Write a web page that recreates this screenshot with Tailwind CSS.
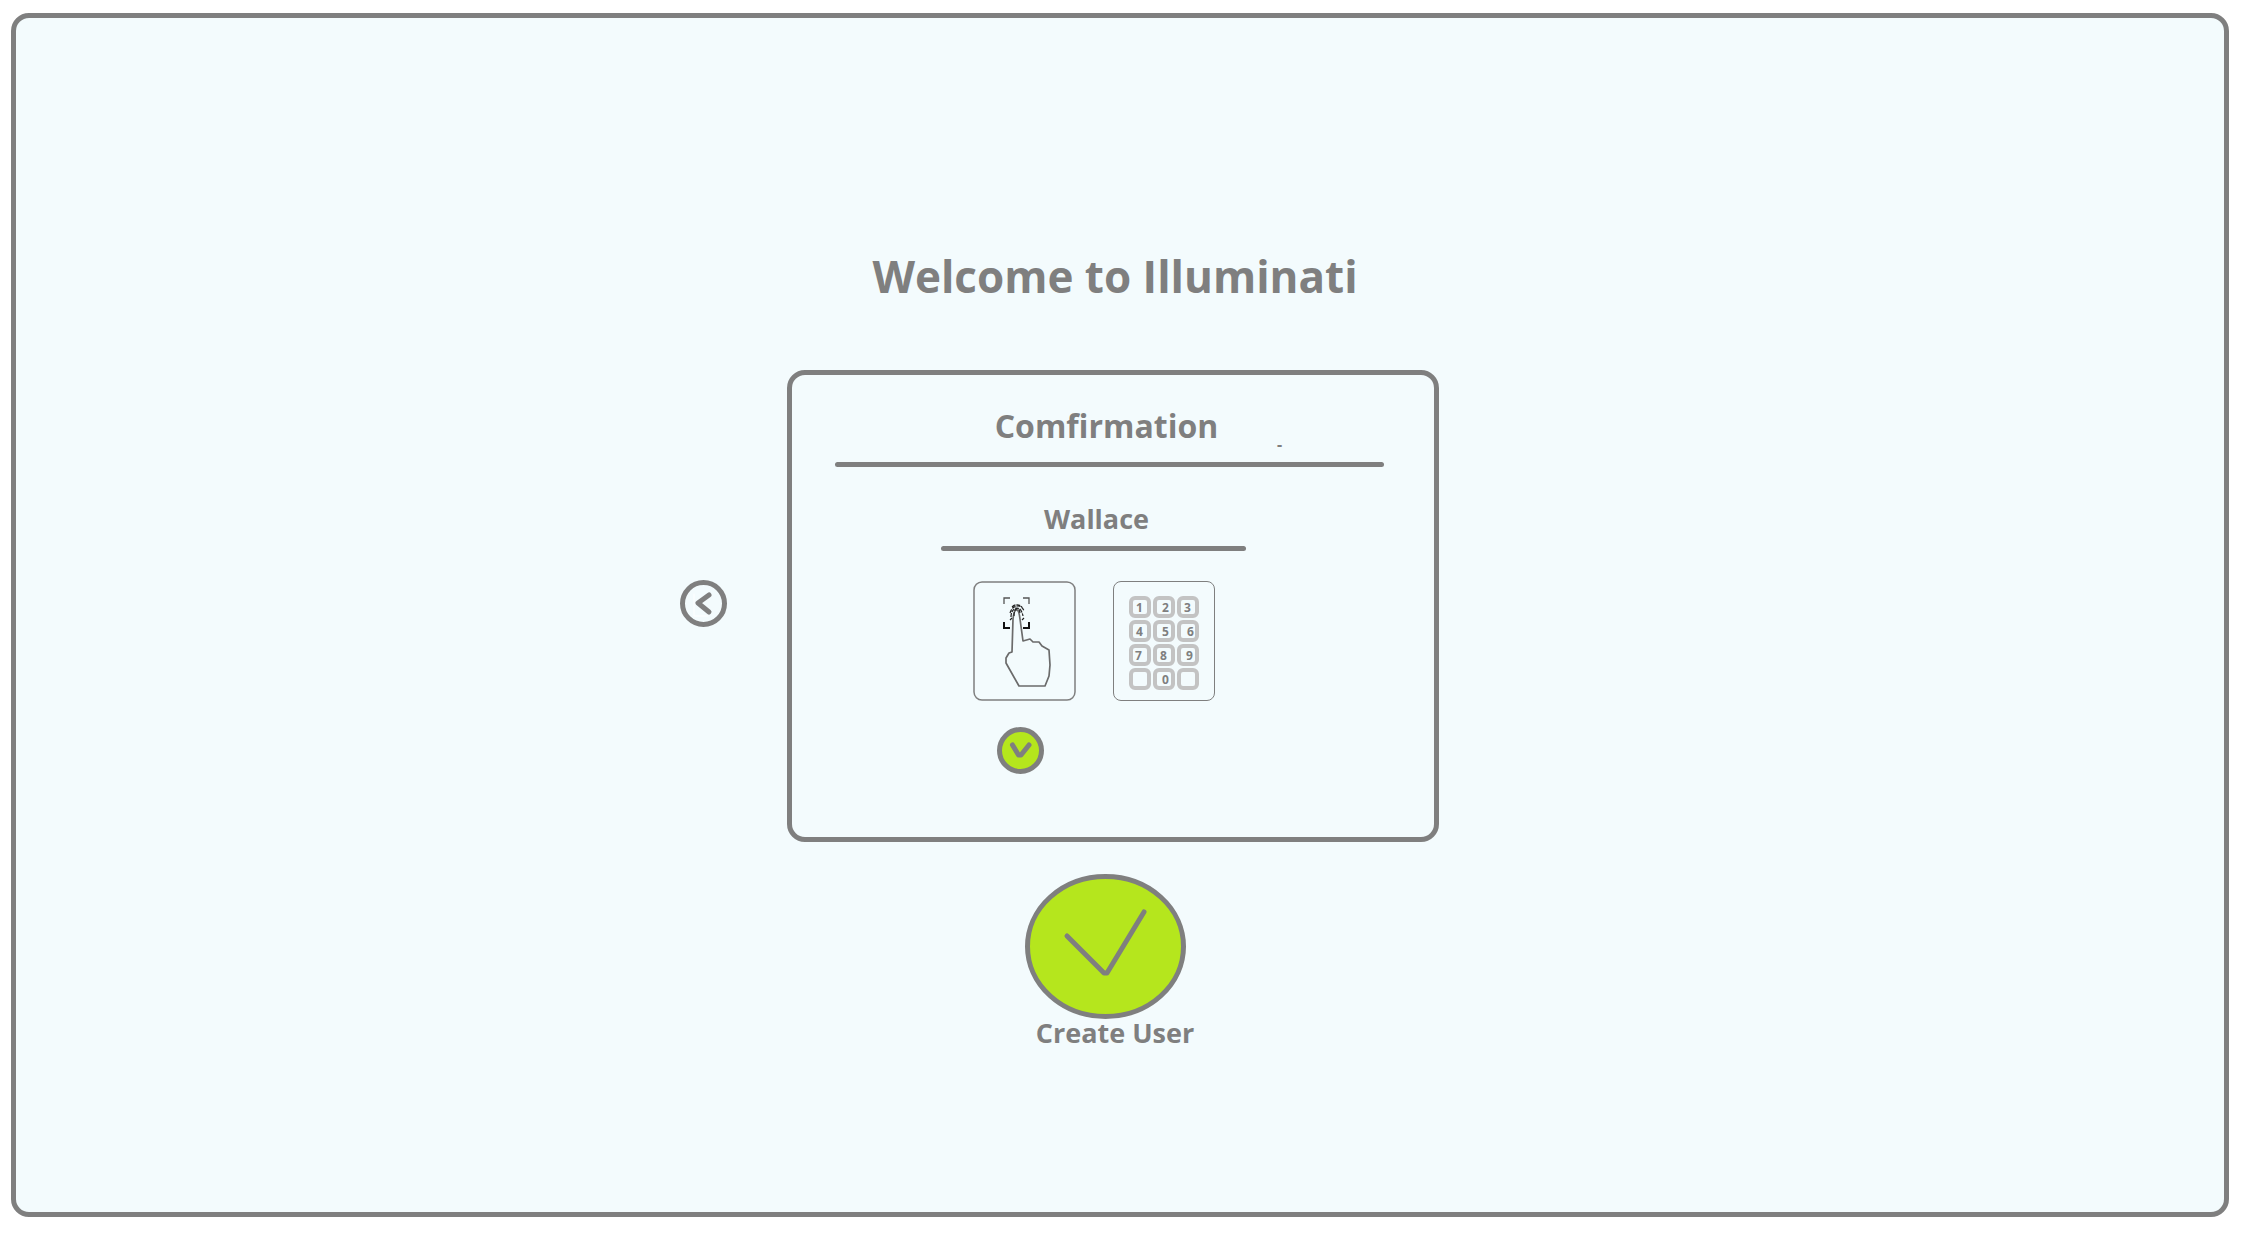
<!DOCTYPE html>
<html lang="en">
<head>
<meta charset="utf-8">
<title>Welcome to Illuminati</title>
<script src="https://cdn.jsdelivr.net/npm/@tailwindcss/browser@4"></script>
</head>
<body class="flex min-h-screen flex-col bg-white pt-[13px] pr-[19px] pb-[35px] pl-[11px] font-['Open_Sans','Noto_Sans',sans-serif] text-[#7f7f7f]">
<main class="flex grow flex-col rounded-[18px] border-5 border-[#7f7f7f] bg-[#f3fbfd] pt-[224px] pr-[14px]">
  <h1 class="pl-[4px] text-center text-[44px] leading-[68px] font-bold">Welcome to Illuminati</h1>

  <div class="mt-[60px] grid grid-cols-[1fr_652px_1fr] items-center">
    <button type="button" aria-label="Back" class="mr-[60px] mb-[5px] justify-self-end">
      <svg class="block size-[47px]" viewBox="0 0 47 47" fill="none" stroke="#7f7f7f" stroke-width="5" stroke-linecap="round" stroke-linejoin="round"><path d="M14 14v22h14" stroke="#fff" stroke-width="1"/><circle cx="23.500" cy="23.500" r="21"/><path d="M29 15l-11 8 11 9"/></svg>
    </button>

    <section class="min-h-[472px] rounded-[18px] border-5 border-[#7f7f7f] pt-[28px] pb-[61px] pl-[43px]">
      <div class="relative w-[549px]">
        <h2 class="pr-[6px] text-center text-[32px] leading-[46px] font-bold">Comfirmation</h2>
        <span class="absolute top-[31px] left-[442px] text-[16px] leading-[20px] font-bold" aria-hidden="true">-</span>
        <div class="mt-[13px] h-[5px] rounded-full bg-[#7f7f7f]"></div>
      </div>
      <div class="flex w-[549px] flex-col items-center pr-[32px]">
        <h3 class="mt-[32px] pl-[6px] text-[27px] leading-[40px] font-bold">Wallace</h3>
        <div class="mt-[7px] h-[5px] w-[305px] rounded-full bg-[#7f7f7f]"></div>
        <div class="mt-[30px] flex items-start gap-[37px]">
          <div class="flex flex-col gap-[26px]">
            <button type="button" aria-label="Fingerprint">
              <svg class="block h-[120px] w-[103px]" viewBox="0 0 103 120" fill="none" stroke="#7f7f7f">
                <rect x="1" y="1" width="101" height="118" rx="8" stroke-width="1.500"/>
                <path d="M31 23v-6h6M50 17h6v6" stroke-width="1.300" stroke="#555"/>
                <path d="M31 41v6h6M50 47h6v-6" stroke-width="2" stroke="#111"/>
                <path d="M39 71L40 38Q41 29 43.500 29Q46 29 47 38L50 60L57 58L60 61L66 61L69 65L76 69L77 84L76 95L72 105H46L33 82V77L36 72Z" stroke="#6b6b6b" stroke-width="1.700" stroke-linejoin="round"/>
                <path d="M38 36c0-6 3-9 6-9s5 3 6 8M37 32c2-6 5-7 8-7s5 2 6 5M39 26c3-3 7-3 10 0M41 35c0-5 1-7 3-7s3 2 3 5M37 39l2-2M49 39l2-2" stroke-width="1.200" stroke="#222" stroke-dasharray="4 1"/>
              </svg>
            </button>
            <button type="button" aria-label="Fingerprint selected" class="self-center pr-[8px]">
              <svg class="block size-[47px]" viewBox="0 0 47 47" fill="none" stroke="#7f7f7f" stroke-width="5" stroke-linecap="round" stroke-linejoin="round"><circle cx="23.500" cy="23.500" r="21" fill="#b5e61d"/><path d="M15.500 18l6 10h2.500l8-10"/></svg>
            </button>
          </div>
          <button type="button" aria-label="PIN code" class="grid h-[120px] w-[102px] grid-cols-[22px_22px_22px] content-start gap-[2px] rounded-[8px] border border-[#7f7f7f] pt-[14px] pl-[15px] text-[12px] leading-[16px] font-bold">
            <span class="h-[22px] rounded-[6px] border-4 border-[#c3c3c3] text-center">1</span>
            <span class="h-[22px] rounded-[6px] border-4 border-[#c3c3c3] pl-[4px] text-center">2</span>
            <span class="h-[22px] rounded-[6px] border-4 border-[#c3c3c3] text-center">3</span>
            <span class="h-[22px] rounded-[6px] border-4 border-[#c3c3c3] text-center">4</span>
            <span class="h-[22px] rounded-[6px] border-4 border-[#c3c3c3] pl-[4px] text-center">5</span>
            <span class="h-[22px] rounded-[6px] border-4 border-[#c3c3c3] pl-[6px] text-center">6</span>
            <span class="h-[22px] rounded-[6px] border-4 border-[#c3c3c3] pr-[2px] text-center">7</span>
            <span class="h-[22px] rounded-[6px] border-4 border-[#c3c3c3] text-center">8</span>
            <span class="h-[22px] rounded-[6px] border-4 border-[#c3c3c3] pl-[4px] text-center">9</span>
            <span class="h-[22px] rounded-[6px] border-4 border-[#c3c3c3]"></span>
            <span class="h-[22px] rounded-[6px] border-4 border-[#c3c3c3] pl-[4px] text-center">0</span>
            <span class="h-[22px] rounded-[6px] border-4 border-[#c3c3c3]"></span>
          </button>
        </div>
      </div>
    </section>
  </div>

  <button type="button" class="mt-[32px] ml-[4px] flex flex-col items-center self-center text-[27px] leading-[27px] font-bold">
    <svg class="mr-[19px] block h-[145px] w-[161px]" viewBox="0 0 161 145" fill="none" stroke="#7f7f7f" stroke-width="5" stroke-linecap="round" stroke-linejoin="round" aria-hidden="true"><ellipse cx="80.500" cy="72.500" rx="78" ry="70" fill="#b5e61d"/><path d="M42 62l37 37h3l37-61"/></svg>
    Create User
  </button>
</main>
</body>
</html>
